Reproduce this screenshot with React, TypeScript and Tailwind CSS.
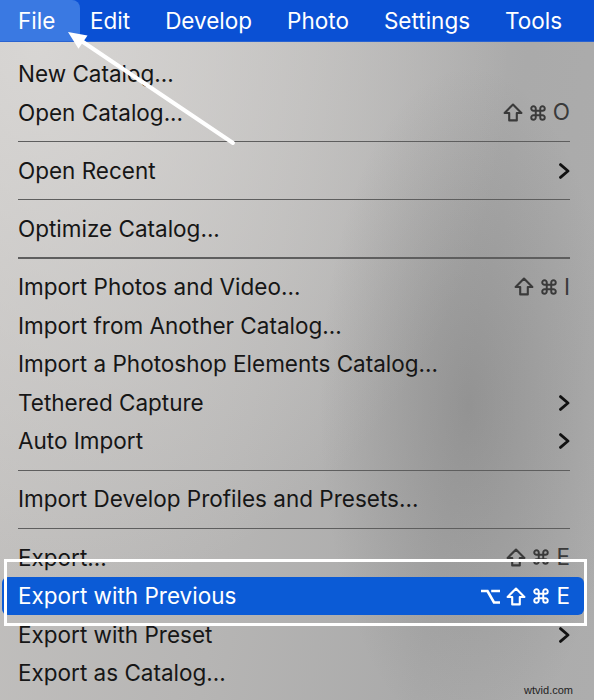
import React from 'react';
import { Command } from 'lucide-react';

type Row =
  | { kind: 'item'; label: string; keys?: string[]; submenu?: boolean; active?: boolean }
  | { kind: 'sep' };

const rows: Row[] = [
  { kind: 'item', label: 'New Catalog...' },
  { kind: 'item', label: 'Open Catalog...', keys: ['shift', 'cmd', 'O'] },
  { kind: 'sep' },
  { kind: 'item', label: 'Open Recent', submenu: true },
  { kind: 'sep' },
  { kind: 'item', label: 'Optimize Catalog...' },
  { kind: 'sep' },
  { kind: 'item', label: 'Import Photos and Video...', keys: ['shift', 'cmd', 'I'] },
  { kind: 'item', label: 'Import from Another Catalog...' },
  { kind: 'item', label: 'Import a Photoshop Elements Catalog...' },
  { kind: 'item', label: 'Tethered Capture', submenu: true },
  { kind: 'item', label: 'Auto Import', submenu: true },
  { kind: 'sep' },
  { kind: 'item', label: 'Import Develop Profiles and Presets...' },
  { kind: 'sep' },
  { kind: 'item', label: 'Export...', keys: ['shift', 'cmd', 'E'] },
  { kind: 'item', label: 'Export with Previous', keys: ['opt', 'shift', 'cmd', 'E'], active: true },
  { kind: 'item', label: 'Export with Preset', submenu: true },
  { kind: 'item', label: 'Export as Catalog...' },
];

const menus = ['Edit', 'Develop', 'Photo', 'Settings', 'Tools'];

function Chevron() {
  return (
    <svg width="12" height="16" viewBox="0 0 12 16" fill="none">
      <polyline points="2.5,1.6 10,8 2.5,14.4" stroke="#111" strokeWidth="2.8" strokeLinecap="round" strokeLinejoin="round" />
    </svg>
  );
}

function KeyGlyph({ k }: { k: string }) {
  if (k === 'shift') {
    return (
      <svg width="20" height="19" viewBox="0 0 20 19" fill="none">
        <path d="M10 1.6 L18.4 10 H13.8 V17.4 H6.2 V10 H1.6 Z" stroke="currentColor" strokeWidth="2.1" strokeLinejoin="round" />
      </svg>
    );
  }
  if (k === 'opt') {
    return (
      <svg width="19" height="17" viewBox="0 0 19 17" fill="none">
        <path d="M1 3 H6.5 L13 14.5 H18.5 M11.5 3 H18.5" stroke="currentColor" strokeWidth="2.6" strokeLinecap="square" />
      </svg>
    );
  }
  if (k === 'cmd') {
    return <Command size={18} strokeWidth={2.6} />;
  }
  return <span className="text-[22.5px] leading-none">{k}</span>;
}

function Shortcut({ keys, active }: { keys: string[]; active?: boolean }) {
  return (
    <div className={`flex items-center gap-[6px] ${active ? 'text-white' : 'text-[#3a3a3a]'}`}>
      {keys.map((k, i) => (
        <KeyGlyph key={i} k={k} />
      ))}
    </div>
  );
}

export default function App() {
  return (
    <div className="relative w-[594px] h-[700px] overflow-hidden font-['Inter',sans-serif] bg-[radial-gradient(ellipse_150px_340px_at_79%_58%,rgba(80,80,80,0.26)_0%,rgba(80,80,80,0)_100%),radial-gradient(ellipse_at_6%_6%,rgba(218,216,214,0.9)_0%,rgba(218,216,214,0)_60%),linear-gradient(100deg,#c4c2c0_0%,#b6b5b4_45%,#aaaaaa_75%,#adadad_100%)]">
      {/* menu bar */}
      <div className="flex items-stretch h-[42px] bg-[#0a50d4] text-white text-[22.5px] border-b border-[#2a63d0]">
        <div className="flex items-center w-[80px] pl-[18px] bg-[#3a79e2] rounded-tr-[8px]">File</div>
        <div className="flex items-center gap-[35px] ml-[10px]">
          {menus.map((m) => (
            <span key={m}>{m}</span>
          ))}
        </div>
      </div>

      {/* menu list */}
      <div className="flex flex-col pt-[12.7px]">
        {rows.map((r, i) =>
          r.kind === 'sep' ? (
            <div key={i} className="h-[19.5px] flex items-center ml-[18px] mr-[24px]">
              <div className="h-[1.5px] w-full bg-[#5e5e5e]" />
            </div>
          ) : (
            <div
              key={i}
              className={`flex items-center justify-between h-[38.6px] ml-[2px] mr-[10px] pl-[16px] pr-[14px] rounded-[6px] text-[22.5px] ${
                r.active ? 'bg-[#0b5bd6] text-white' : 'text-[#161616]'
              }`}
            >
              <span>{r.label}</span>
              {r.keys && <Shortcut keys={r.keys} active={r.active} />}
              {r.submenu && <Chevron />}
            </div>
          )
        )}
      </div>

      {/* highlight box */}
      <div className="absolute left-[4px] top-[559px] w-[583px] h-[67px] border-[3px] border-white" />

      {/* arrow */}
      <svg className="absolute left-0 top-0" width="594" height="200" viewBox="0 0 594 200">
        <line x1="233" y1="143" x2="80" y2="40" stroke="white" strokeWidth="4" strokeLinecap="round" />
        <polygon points="68,32 87.5,35.5 78.5,48.7" fill="white" />
      </svg>

      <span className="absolute right-[21px] bottom-[2px] text-[11px] text-[#222] font-['Liberation_Sans']">wtvid.com</span>
    </div>
  );
}
